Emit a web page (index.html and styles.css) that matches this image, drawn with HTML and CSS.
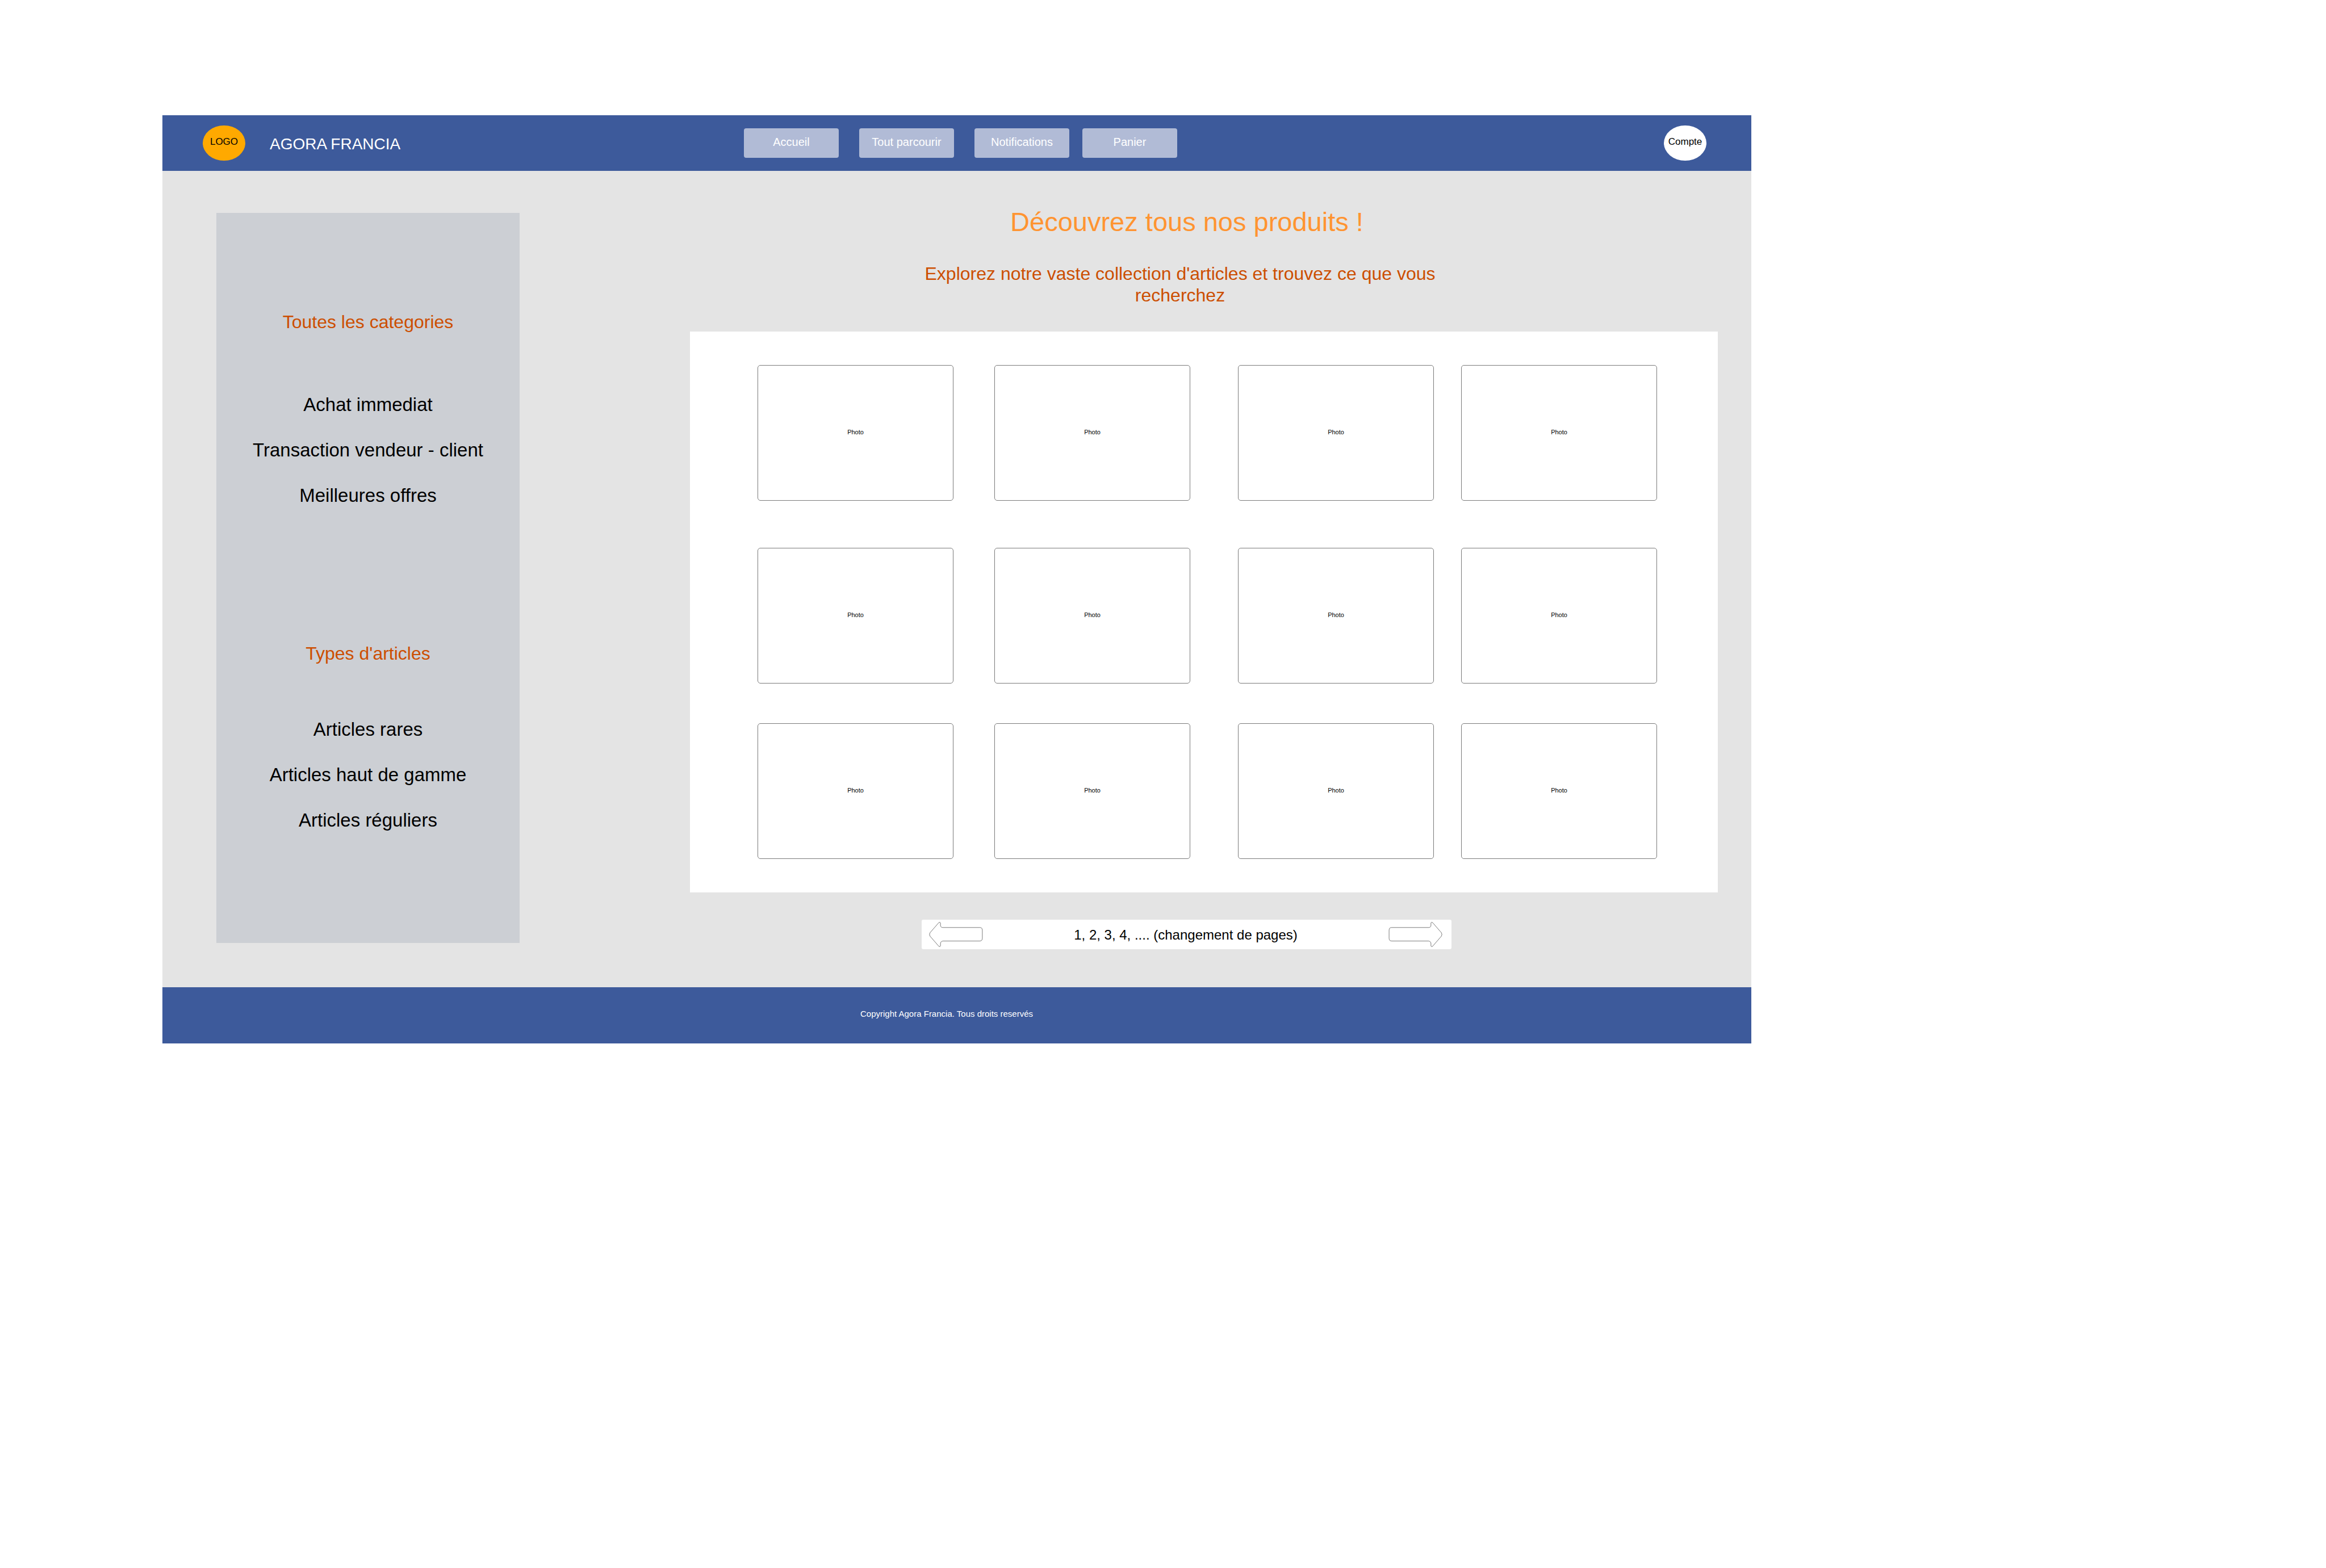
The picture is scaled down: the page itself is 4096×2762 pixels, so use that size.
FILE: index.html
```html
<!DOCTYPE html>
<html lang="fr">
<head>
<meta charset="utf-8">
<title>Agora Francia</title>
<meta name="viewport" content="width=device-width, initial-scale=1">
<link rel="stylesheet" href="styles.css">
</head>
<body>
<div class="page">
  <header class="header">
    <div class="brand">
      <a class="badge badge-logo" href="#">LOGO</a>
      <span class="brand-name">AGORA FRANCIA</span>
    </div>
    <nav class="nav">
      <button class="nav-button" type="button">Accueil</button>
      <button class="nav-button" type="button">Tout parcourir</button>
      <button class="nav-button" type="button">Notifications</button>
      <button class="nav-button" type="button">Panier</button>
    </nav>
    <button class="badge badge-account" type="button">Compte</button>
  </header>

  <div class="body">
    <aside class="sidebar">
      <section class="group">
        <h2 class="group-title">Toutes les categories</h2>
        <ul class="group-list">
          <li><a href="#">Achat immediat</a></li>
          <li><a href="#">Transaction vendeur - client</a></li>
          <li><a href="#">Meilleures offres</a></li>
        </ul>
      </section>
      <section class="group group-types">
        <h2 class="group-title">Types d'articles</h2>
        <ul class="group-list">
          <li><a href="#">Articles rares</a></li>
          <li><a href="#">Articles haut de gamme</a></li>
          <li><a href="#">Articles réguliers</a></li>
        </ul>
      </section>
    </aside>

    <main class="main">
      <h1 class="title">Découvrez tous nos produits !</h1>
      <p class="subtitle">Explorez notre vaste collection d'articles et trouvez ce que vous recherchez</p>

      <div class="products">
        <div class="card">Photo</div><div class="card">Photo</div><div class="card">Photo</div><div class="card">Photo</div>
        <div class="card">Photo</div><div class="card">Photo</div><div class="card">Photo</div><div class="card">Photo</div>
        <div class="card">Photo</div><div class="card">Photo</div><div class="card">Photo</div><div class="card">Photo</div>
      </div>

      <div class="pager">
        <button class="arrow" type="button" aria-label="Page précédente">
          <svg viewBox="0 0 158 74" width="95" height="44"><path d="M150 16.500Q157 16.500 157 25V48Q157 56.500 149 56.500H40Q33 58 33 64V71Q32 75 28 72L2 42Q-1 37 2 32L28 2Q32 -1 33 3V10Q33 16 40 16.500Z"/></svg>
        </button>
        <span class="pager-text">1, 2, 3, 4, .... (changement de pages)</span>
        <button class="arrow" type="button" aria-label="Page suivante">
          <svg viewBox="0 0 158 74" width="95" height="44"><path d="M8 16.500Q1 16.500 1 25V48Q1 56.500 9 56.500H118Q125 58 125 64V71Q126 75 130 72L156 42Q159 37 156 32L130 2Q126 -1 125 3V10Q125 16 118 16.500Z"/></svg>
        </button>
      </div>
    </main>
  </div>

  <footer class="footer">Copyright Agora Francia. Tous droits reservés</footer>
</div>
</body>
</html>
```
FILE: styles.css
```css
* {
  box-sizing: border-box;
}

body {
  margin: 0;
  background: #fff;
  color: #000;
  font-family: "Liberation Sans", Arial, sans-serif;
}

a {
  color: inherit;
  text-decoration: none;
}

button {
  margin: 0;
  padding: 0;
  border: 0;
  font: inherit;
  cursor: pointer;
}

.page {
  margin: 203px 1012px 0 286px;
  background: #e4e4e4;
}

/* Header */
.header {
  display: flex;
  align-items: center;
  padding: 18px 79px 18px 71px;
  background: #3d5a9b;
}

.brand {
  display: flex;
  align-items: center;
  flex: 0 0 953px;
  gap: 43px;
}

.brand-name {
  padding-top: 3px;
  color: #fff;
  font-size: 28px;
  line-height: 32px;
}

.badge {
  display: flex;
  align-items: center;
  justify-content: center;
  width: 75px;
  height: 62px;
  padding-bottom: 4px;
  border-radius: 50%;
  color: #000;
  font-size: 17px;
}

.badge-logo {
  background: #ffa900;
}

.badge-account {
  margin-left: auto;
  background: #fff;
}

.nav {
  display: flex;
  gap: 36px;
}

.nav-button {
  width: 167px;
  height: 52px;
  padding-bottom: 4px;
  border-radius: 4px;
  background: #b1bbd6;
  color: #fff;
  font-size: 20px;
}

.nav-button:last-child {
  margin-left: -13px;
}

/* Content */
.body {
  display: flex;
  padding: 62px 59px 67px 95px;
}

.sidebar {
  width: 534px;
  margin: 12px 0 11px;
  padding-top: 174px;
  background: #cccfd4;
  text-align: center;
}

.group-title {
  margin: 0;
  color: #cc4e00;
  font-size: 32px;
  font-weight: 400;
  line-height: 36px;
}

.group-list {
  margin: 88px 0 0;
  padding: 0;
  list-style: none;
  font-size: 33px;
  line-height: 80px;
}

.group-types {
  margin-top: 220px;
}

.group-types .group-list {
  margin-top: 76px;
}

.main {
  flex: 1;
  margin-left: 300px;
}

.title {
  margin: 0;
  padding-right: 60px;
  color: #ff9431;
  font-size: 47px;
  font-weight: 400;
  line-height: 56px;
  text-align: center;
}

.subtitle {
  width: 960px;
  margin: 44px 0 0 383px;
  color: #cc4e00;
  font-size: 32px;
  line-height: 38px;
  text-align: center;
}

/* Product grid: the even tracks are the gutters */
.products {
  display: grid;
  grid-template-columns: 1fr 72px 1fr 84px 1fr 48px 1fr;
  grid-template-rows: 239px 83px 239px 70px 239px;
  margin-top: 45px;
  padding: 59px 107px 59px 119px;
  background: #fff;
}

.card {
  display: flex;
  align-items: center;
  justify-content: center;
  grid-row: 1;
  padding-bottom: 3px;
  border: 1px solid #7a7a7a;
  border-radius: 5px;
  font-size: 11px;
}

.card:nth-child(n + 5) {
  grid-row: 3;
}

.card:nth-child(n + 9) {
  grid-row: 5;
}

.card:nth-child(4n + 1) {
  grid-column: 1;
}

.card:nth-child(4n + 2) {
  grid-column: 3;
}

.card:nth-child(4n + 3) {
  grid-column: 5;
}

.card:nth-child(4n + 4) {
  grid-column: 7;
}

.pager {
  display: flex;
  align-items: center;
  justify-content: space-between;
  width: 933px;
  height: 52px;
  margin: 48px 0 0 408px;
  padding: 0 16px 0 13px;
  border-radius: 3px;
  background: #fff;
}

.pager-text {
  padding-top: 2px;
  font-size: 24px;
  line-height: 28px;
}

.arrow {
  display: flex;
  background: none;
}

.arrow svg {
  overflow: visible;
  fill: #fff;
  stroke: #222;
  stroke-width: 1;
}

/* Footer */
.footer {
  padding: 38px 36px 43px 0;
  background: #3d5a9b;
  color: #fff;
  font-size: 15px;
  line-height: 18px;
  text-align: center;
}
```
